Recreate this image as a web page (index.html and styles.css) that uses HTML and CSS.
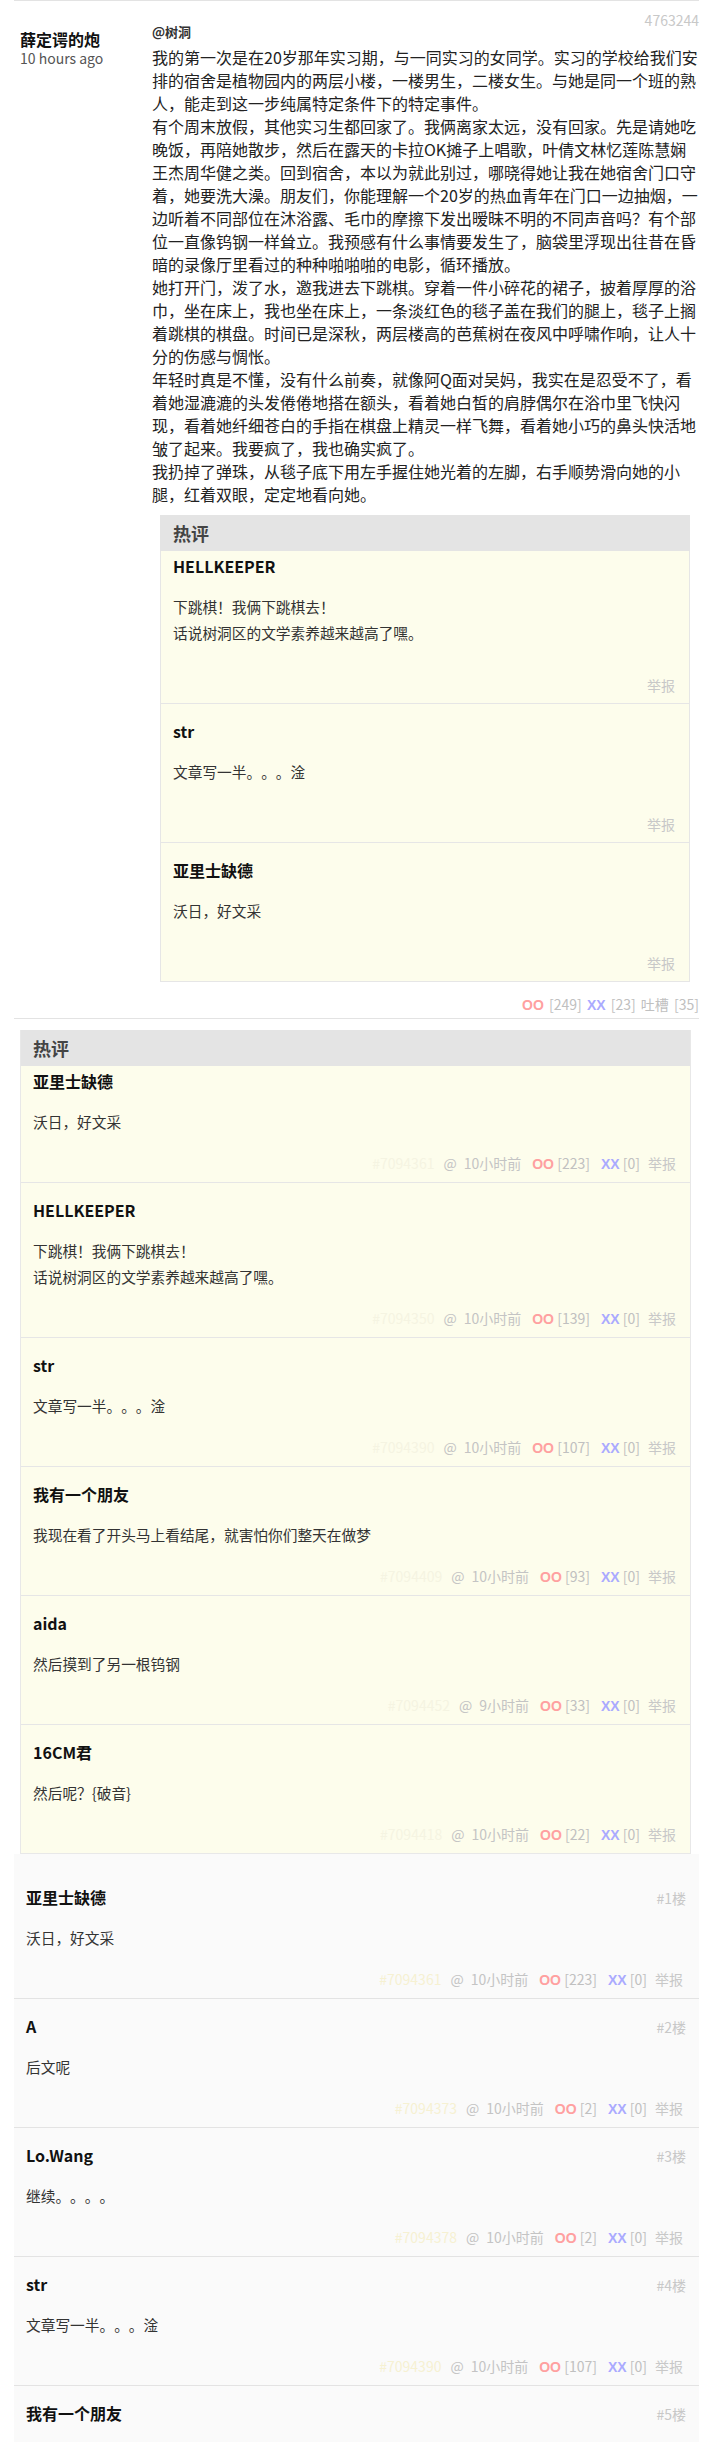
FILE: index.html
```html
<!DOCTYPE html>
<html lang="zh-CN">
<head>
<meta charset="utf-8">
<title>树洞</title>
<link rel="stylesheet" href="styles.css">
</head>
<body>
<div class="wrap">
  <article class="post">
    <div class="author">
      <div class="author-name">薛定谔的炮</div>
      <div class="author-time">10 hours ago</div>
    </div>
    <div class="content">
      <div class="content-top">
        <span class="tag">@树洞</span>
        <span class="post-id">4763244</span>
      </div>
      <div class="body">
        <p>我的第一次是在20岁那年实习期，与一同实习的女同学。实习的学校给我们安排的宿舍是植物园内的两层小楼，一楼男生，二楼女生。与她是同一个班的熟人，能走到这一步纯属特定条件下的特定事件。</p>
        <p>有个周末放假，其他实习生都回家了。我俩离家太远，没有回家。先是请她吃晚饭，再陪她散步，然后在露天的卡拉OK摊子上唱歌，叶倩文林忆莲陈慧娴王杰周华健之类。回到宿舍，本以为就此别过，哪晓得她让我在她宿舍门口守着，她要洗大澡。朋友们，你能理解一个20岁的热血青年在门口一边抽烟，一边听着不同部位在沐浴露、毛巾的摩擦下发出暧昧不明的不同声音吗？有个部位一直像钨钢一样耸立。我预感有什么事情要发生了，脑袋里浮现出往昔在昏暗的录像厅里看过的种种啪啪啪的电影，循环播放。</p>
        <p>她打开门，泼了水，邀我进去下跳棋。穿着一件小碎花的裙子，披着厚厚的浴巾，坐在床上，我也坐在床上，一条淡红色的毯子盖在我们的腿上，毯子上搁着跳棋的棋盘。时间已是深秋，两层楼高的芭蕉树在夜风中呼啸作响，让人十分的伤感与惆怅。</p>
        <p>年轻时真是不懂，没有什么前奏，就像阿Q面对吴妈，我实在是忍受不了，看着她湿漉漉的头发倦倦地搭在额头，看着她白皙的肩脖偶尔在浴巾里飞快闪现，看着她纤细苍白的手指在棋盘上精灵一样飞舞，看着她小巧的鼻头快活地皱了起来。我要疯了，我也确实疯了。</p>
        <p>我扔掉了弹珠，从毯子底下用左手握住她光着的左脚，右手顺势滑向她的小腿，红着双眼，定定地看向她。</p>
      </div>

      <section class="hot hot-inline">
        <div class="hot-head">热评</div>
        <div class="hot-item">
          <div class="c-name">HELLKEEPER</div>
          <p class="c-text">下跳棋！我俩下跳棋去！<br>话说树洞区的文学素养越来越高了嘿。</p>
          <div class="c-meta"><span class="report">举报</span></div>
        </div>
        <div class="hot-item">
          <div class="c-name">str</div>
          <p class="c-text">文章写一半。。。淦</p>
          <div class="c-meta"><span class="report">举报</span></div>
        </div>
        <div class="hot-item">
          <div class="c-name">亚里士缺德</div>
          <p class="c-text">沃日，好文采</p>
          <div class="c-meta"><span class="report">举报</span></div>
        </div>
      </section>

      <div class="post-foot"><b class="oo">OO</b> [249] <b class="xx">XX</b> [23] 吐槽 [35]</div>
    </div>
  </article>

  <section class="hot hot-main">
    <div class="hot-head">热评</div>
    <div class="hot-item">
      <div class="c-name">亚里士缺德</div>
      <p class="c-text">沃日，好文采</p>
      <div class="c-meta"><span class="cid">#7094361</span><span class="at">@<span class="time">10小时前</span></span><span class="vote"><b class="oo">OO</b> [223]</span><span class="vote"><b class="xx">XX</b> [0]</span><span class="report">举报</span></div>
    </div>
    <div class="hot-item">
      <div class="c-name">HELLKEEPER</div>
      <p class="c-text">下跳棋！我俩下跳棋去！<br>话说树洞区的文学素养越来越高了嘿。</p>
      <div class="c-meta"><span class="cid">#7094350</span><span class="at">@<span class="time">10小时前</span></span><span class="vote"><b class="oo">OO</b> [139]</span><span class="vote"><b class="xx">XX</b> [0]</span><span class="report">举报</span></div>
    </div>
    <div class="hot-item">
      <div class="c-name">str</div>
      <p class="c-text">文章写一半。。。淦</p>
      <div class="c-meta"><span class="cid">#7094390</span><span class="at">@<span class="time">10小时前</span></span><span class="vote"><b class="oo">OO</b> [107]</span><span class="vote"><b class="xx">XX</b> [0]</span><span class="report">举报</span></div>
    </div>
    <div class="hot-item">
      <div class="c-name">我有一个朋友</div>
      <p class="c-text">我现在看了开头马上看结尾，就害怕你们整天在做梦</p>
      <div class="c-meta"><span class="cid">#7094409</span><span class="at">@<span class="time">10小时前</span></span><span class="vote"><b class="oo">OO</b> [93]</span><span class="vote"><b class="xx">XX</b> [0]</span><span class="report">举报</span></div>
    </div>
    <div class="hot-item">
      <div class="c-name">aida</div>
      <p class="c-text">然后摸到了另一根钨钢</p>
      <div class="c-meta"><span class="cid">#7094452</span><span class="at">@<span class="time">9小时前</span></span><span class="vote"><b class="oo">OO</b> [33]</span><span class="vote"><b class="xx">XX</b> [0]</span><span class="report">举报</span></div>
    </div>
    <div class="hot-item">
      <div class="c-name">16CM君</div>
      <p class="c-text">然后呢？{破音}</p>
      <div class="c-meta"><span class="cid">#7094418</span><span class="at">@<span class="time">10小时前</span></span><span class="vote"><b class="oo">OO</b> [22]</span><span class="vote"><b class="xx">XX</b> [0]</span><span class="report">举报</span></div>
    </div>
  </section>

  <ol class="comments">
    <li class="comment">
      <div class="c-head"><span class="c-name">亚里士缺德</span><span class="floor">#1楼</span></div>
      <p class="c-text">沃日，好文采</p>
      <div class="c-meta"><span class="cid">#7094361</span><span class="at">@<span class="time">10小时前</span></span><span class="vote"><b class="oo">OO</b> [223]</span><span class="vote"><b class="xx">XX</b> [0]</span><span class="report">举报</span></div>
    </li>
    <li class="comment">
      <div class="c-head"><span class="c-name">A</span><span class="floor">#2楼</span></div>
      <p class="c-text">后文呢</p>
      <div class="c-meta"><span class="cid">#7094373</span><span class="at">@<span class="time">10小时前</span></span><span class="vote"><b class="oo">OO</b> [2]</span><span class="vote"><b class="xx">XX</b> [0]</span><span class="report">举报</span></div>
    </li>
    <li class="comment">
      <div class="c-head"><span class="c-name">Lo.Wang</span><span class="floor">#3楼</span></div>
      <p class="c-text">继续。。。。</p>
      <div class="c-meta"><span class="cid">#7094378</span><span class="at">@<span class="time">10小时前</span></span><span class="vote"><b class="oo">OO</b> [2]</span><span class="vote"><b class="xx">XX</b> [0]</span><span class="report">举报</span></div>
    </li>
    <li class="comment">
      <div class="c-head"><span class="c-name">str</span><span class="floor">#4楼</span></div>
      <p class="c-text">文章写一半。。。淦</p>
      <div class="c-meta"><span class="cid">#7094390</span><span class="at">@<span class="time">10小时前</span></span><span class="vote"><b class="oo">OO</b> [107]</span><span class="vote"><b class="xx">XX</b> [0]</span><span class="report">举报</span></div>
    </li>
    <li class="comment">
      <div class="c-head"><span class="c-name">我有一个朋友</span><span class="floor">#5楼</span></div>
      <p class="c-text">我现在看了开头马上看结尾，就害怕你们整天在做梦</p>
      <div class="c-meta"><span class="cid">#7094409</span><span class="at">@<span class="time">10小时前</span></span><span class="vote"><b class="oo">OO</b> [93]</span><span class="vote"><b class="xx">XX</b> [0]</span><span class="report">举报</span></div>
    </li>
  </ol>
</div>
</body>
</html>
```

FILE: styles.css
```css
* { box-sizing: border-box; }

html, body {
  margin: 0;
  padding: 0;
  background: #fff;
}

body {
  font-family: "Noto Sans CJK SC", "Noto Sans", sans-serif;
  color: #222;
  text-spacing-trim: space-all;
}

.wrap {
  margin: 0 10px 0 14px;
}

/* ---------- post ---------- */
.post {
  display: flex;
  border-top: 1px solid #e3e3e3;
  border-bottom: 1px solid #e3e3e3;
  padding: 9px 0 3px;
}

.author {
  width: 138px;
  flex: none;
  padding: 20px 0 0 6px;
}

.author-name {
  font-size: 16px;
  font-weight: bold;
  line-height: 18px;
  color: #111;
}

.author-time {
  font-size: 14px;
  line-height: 20px;
  color: #555;
}

.content {
  flex: 1;
  min-width: 0;
}

.content-top {
  display: flex;
  justify-content: space-between;
  align-items: flex-start;
}

.tag {
  margin-top: 14px;
  font-size: 13px;
  font-weight: bold;
  line-height: 16px;
  color: #333;
}

.post-id {
  font-size: 14px;
  line-height: 20px;
  color: #c8c8c8;
}

.body {
  margin-top: 6px;
  font-size: 16px;
  line-height: 23px;
  color: #222;
}

.body p {
  margin: 0;
}

/* ---------- hot comments ---------- */
.hot-head {
  height: 36px;
  line-height: 36px;
  padding-left: 12px;
  background: #e4e4e4;
  font-size: 18px;
  font-weight: bold;
  color: #444;
}

.hot-item {
  background: #fdfdec;
  border-top: 1px solid #e6e6e6;
  padding: 15px 14px 8px 12px;
}

.hot-head + .hot-item {
  border-top: 0;
  padding-top: 3px;
}

.hot-inline {
  margin: 9px 9px 0 8px;
}

.hot-inline .hot-head {
  padding-left: 13px;
}

.hot-inline .hot-item {
  border-left: 1px solid #e6e6e6;
  border-right: 1px solid #e6e6e6;
}

.hot-inline .hot-item:last-child {
  border-bottom: 1px solid #e6e6e6;
}

.hot-inline .c-meta {
  margin-top: 29px;
}

.hot-main {
  margin: 11px 8px 0 6px;
  border: 1px solid #e8e8e8;
  border-top: 0;
}

/* ---------- shared comment parts ---------- */
.c-name {
  font-size: 16px;
  font-weight: bold;
  line-height: 24px;
  color: #111;
}

.c-text {
  margin: 16px 0 0;
  font-size: 14.7px;
  line-height: 26px;
  color: #333;
}

.c-meta {
  margin-top: 18px;
  display: flex;
  justify-content: flex-end;
  align-items: baseline;
  font-size: 14px;
  line-height: 20px;
  color: #c4c4c4;
  white-space: nowrap;
}

.cid {
  color: #f5f4e2;
}

.comment .cid {
  color: #f6f1d2;
}

.at {
  margin-left: 9px;
}

.time {
  margin-left: 7px;
}

.vote {
  margin-left: 11px;
  color: #c0c0c0;
}

.report {
  margin-left: 8px;
  color: #c8c8c8;
}

.oo,
.xx {
  font-family: "Liberation Sans", Arial, sans-serif;
  font-weight: bold;
}

.oo { color: #ffa0a0; }
.xx { color: #aaaaff; }

.post-foot {
  margin-top: 12px;
  text-align: right;
  font-size: 14px;
  line-height: 20px;
  color: #c0c0c0;
  word-spacing: 2px;
}

/* ---------- floor list ---------- */
.comments {
  list-style: none;
  margin: 0;
  padding: 16px 0 0;
  background: #fafafa;
}

.comment {
  border-top: 1px solid #e3e3e3;
  padding: 15px 13px 8px 12px;
}

.comment:first-child {
  border-top: 0;
}

.comment .c-meta {
  padding-right: 3px;
}

.c-head {
  display: flex;
  justify-content: space-between;
  align-items: baseline;
}

.floor {
  font-size: 14px;
  color: #c8c8c8;
}
```
